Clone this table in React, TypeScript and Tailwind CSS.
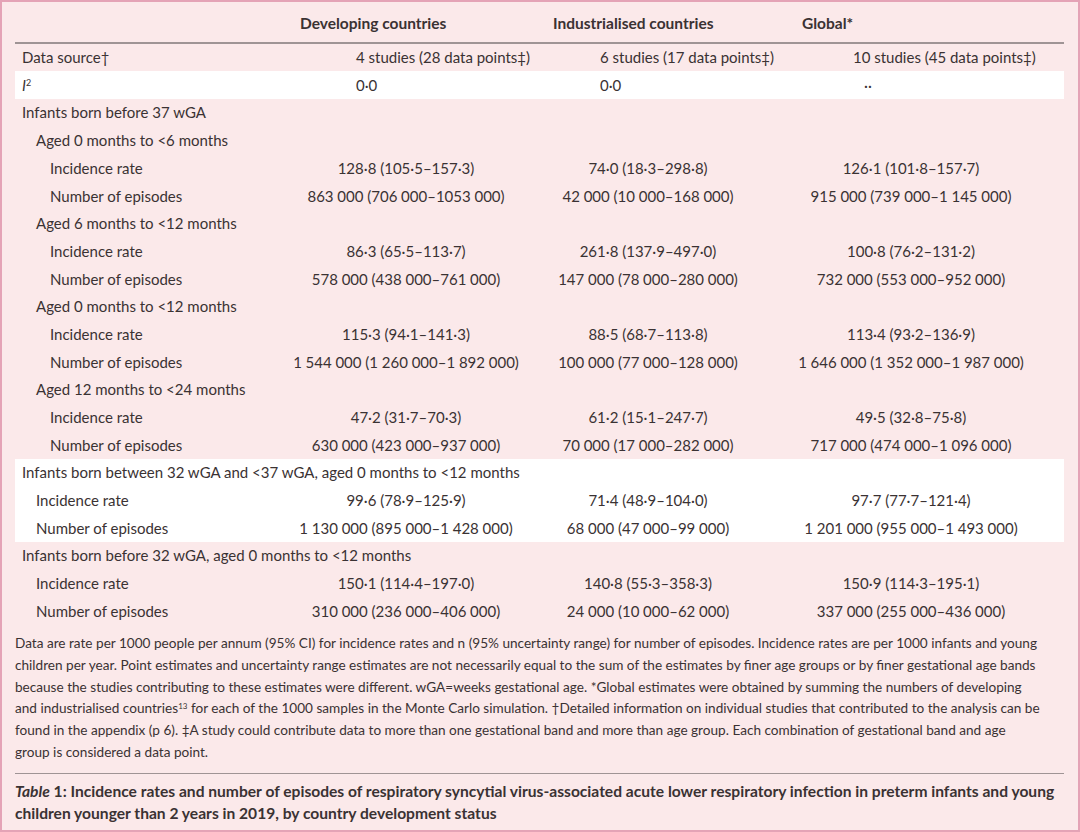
import React from "react";

type Row = {
  label: React.ReactNode;
  indent: 0 | 1 | 2;
  vals?: [string, string, string];
  white?: boolean;
};

// narrow gap only between digit groups, a normal space before "("
const n = (s: string) => s.replace(/(\d) (\d)/g, "$1\u2005$2");

const rows: Row[] = [
  { label: "Infants born before 37 wGA", indent: 0 },
  { label: "Aged 0 months to <6 months", indent: 1 },
  { label: "Incidence rate", indent: 2, vals: ["128·8 (105·5–157·3)", "74·0 (18·3–298·8)", "126·1 (101·8–157·7)"] },
  { label: "Number of episodes", indent: 2, vals: ["863 000 (706 000–1053 000)", "42 000 (10 000–168 000)", "915 000 (739 000–1 145 000)"] },
  { label: "Aged 6 months to <12 months", indent: 1 },
  { label: "Incidence rate", indent: 2, vals: ["86·3 (65·5–113·7)", "261·8 (137·9–497·0)", "100·8 (76·2–131·2)"] },
  { label: "Number of episodes", indent: 2, vals: ["578 000 (438 000–761 000)", "147 000 (78 000–280 000)", "732 000 (553 000–952 000)"] },
  { label: "Aged 0 months to <12 months", indent: 1 },
  { label: "Incidence rate", indent: 2, vals: ["115·3 (94·1–141·3)", "88·5 (68·7–113·8)", "113·4 (93·2–136·9)"] },
  { label: "Number of episodes", indent: 2, vals: ["1 544 000 (1 260 000–1 892 000)", "100 000 (77 000–128 000)", "1 646 000 (1 352 000–1 987 000)"] },
  { label: "Aged 12 months to <24 months", indent: 1 },
  { label: "Incidence rate", indent: 2, vals: ["47·2 (31·7–70·3)", "61·2 (15·1–247·7)", "49·5 (32·8–75·8)"] },
  { label: "Number of episodes", indent: 2, vals: ["630 000 (423 000–937 000)", "70 000 (17 000–282 000)", "717 000 (474 000–1 096 000)"] },
  { label: "Infants born between 32 wGA and <37 wGA, aged 0 months to <12 months", indent: 0, white: true },
  { label: "Incidence rate", indent: 1, vals: ["99·6 (78·9–125·9)", "71·4 (48·9–104·0)", "97·7 (77·7–121·4)"], white: true },
  { label: "Number of episodes", indent: 1, vals: ["1 130 000 (895 000–1 428 000)", "68 000 (47 000–99 000)", "1 201 000 (955 000–1 493 000)"], white: true },
  { label: "Infants born before 32 wGA, aged 0 months to <12 months", indent: 0 },
  { label: "Incidence rate", indent: 1, vals: ["150·1 (114·4–197·0)", "140·8 (55·3–358·3)", "150·9 (114·3–195·1)"] },
  { label: "Number of episodes", indent: 1, vals: ["310 000 (236 000–406 000)", "24 000 (10 000–62 000)", "337 000 (255 000–436 000)"] },
];

const indents = ["pl-[7px]", "pl-[21px]", "pl-[35px]"];

function BodyRow({ row }: { row: Row }) {
  return (
    <div
      className={`grid h-[27.7px] grid-cols-[270px_242px_242px_284px] items-center whitespace-nowrap ${
        row.white ? "bg-white" : ""
      }`}
    >
      <div className={indents[row.indent]}>{row.label}</div>
      {row.vals
        ? row.vals.map((v, i) => (
            <div key={i} className="text-center">
              {n(v)}
            </div>
          ))
        : null}
    </div>
  );
}

export default function App() {
  return (
    <div
      className="w-[1080px] h-[832px] overflow-hidden border-2 border-[#e4a3b6] bg-[#fbe9ea] text-[#3a3233]"
      style={{ fontFamily: "Lato, 'Open Sans', sans-serif" }}
    >
      <div className="pl-[13px] pr-[14px] pt-[8px]">
        <div className="text-[15px]">
          {/* header */}
          <div className="grid h-[28px] grid-cols-[270px_242px_242px_284px] items-center text-[15.5px] font-bold whitespace-nowrap">
            <div />
            <div className="pl-[15px]">Developing countries</div>
            <div className="pl-[26px]">Industrialised countries</div>
            <div className="pl-[33px]">Global*</div>
          </div>
          <div className="mt-[4px] h-[1.5px] bg-[#9f9495]" />

          <div className="grid h-[27.7px] grid-cols-[270px_242px_242px_284px] items-center whitespace-nowrap">
            <div className="pl-[7px]">Data source†</div>
            <div className="pl-[71px]">4 studies (28 data points‡)</div>
            <div className="pl-[73px]">6 studies (17 data points‡)</div>
            <div className="pl-[84px]">10 studies (45 data points‡)</div>
          </div>
          <div className="grid h-[27.7px] grid-cols-[270px_242px_242px_284px] items-center whitespace-nowrap bg-white">
            <div className="pl-[7px]">
              <i>I</i>
              <sup className="text-[9px]">2</sup>
            </div>
            <div className="pl-[71px]">0·0</div>
            <div className="pl-[73px]">0·0</div>
            <div className="pl-[95px]">··</div>
          </div>

          {rows.map((r, i) => (
            <BodyRow key={i} row={r} />
          ))}
        </div>

        <p className="mt-[8px] text-[13.6px] leading-[21.8px] whitespace-nowrap">
          Data are rate per 1000 people per annum (95% CI) for incidence rates and n (95% uncertainty range) for number of episodes. Incidence rates are per 1000 infants and young
          <br />
          children per year. Point estimates and uncertainty range estimates are not necessarily equal to the sum of the estimates by finer age groups or by finer gestational age bands
          <br />
          because the studies contributing to these estimates were different. wGA=weeks gestational age. *Global estimates were obtained by summing the numbers of developing
          <br />
          and industrialised countries<sup className="text-[8px]">13</sup> for each of the 1000 samples in the Monte Carlo simulation. †Detailed information on individual studies that contributed to the analysis can be
          <br />
          found in the appendix (p 6). ‡A study could contribute data to more than one gestational band and more than age group. Each combination of gestational band and age
          <br />
          group is considered a data point.
        </p>

        <div className="mt-[9px] h-[1.5px] bg-[#9f9495]" />

        <p className="mt-[6px] text-[15.6px] font-bold leading-[22px] whitespace-nowrap">
          <i>Table</i> 1: Incidence rates and number of episodes of respiratory syncytial virus-associated acute lower respiratory infection in preterm infants and young
          <br />
          children younger than 2 years in 2019, by country development status
        </p>
      </div>
    </div>
  );
}
